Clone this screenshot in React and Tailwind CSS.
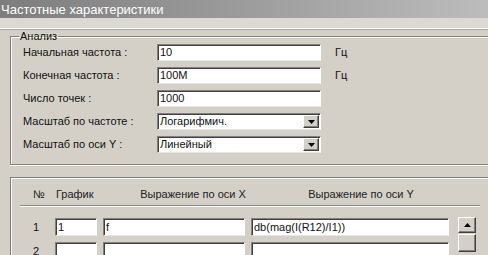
import React from "react";

const FIELDS = [
  { label: "Начальная частота :", value: "10", unit: "Гц" },
  { label: "Конечная частота :", value: "100M", unit: "Гц" },
  { label: "Число точек :", value: "1000" },
  { label: "Масштаб по частоте :", value: "Логарифмич.", select: true },
  { label: "Масштаб по оси Y :", value: "Линейный", select: true },
];

function Sunken({ className, children }) {
  return (
    <div
      className={
        "flex items-center bg-white border border-t-[#808080] border-l-[#808080] border-r-white border-b-[#e8e6e0] shadow-[inset_1px_1px_0_#404040] " +
        className
      }
    >
      {children}
    </div>
  );
}

function Arrow({ up }) {
  return (
    <svg width="7" height="4" viewBox="0 0 7 4">
      <path d={up ? "M0 4 L3.5 0 L7 4 Z" : "M0 0 L7 0 L3.5 4 Z"} fill="#000" />
    </svg>
  );
}

function RaisedButton({ className, children }) {
  return (
    <div
      className={
        "flex items-center justify-center bg-[#d4d0c8] border border-t-white border-l-white border-r-[#404040] border-b-[#404040] shadow-[inset_-1px_-1px_0_#808080] " +
        className
      }
    >
      {children}
    </div>
  );
}

export default function App() {
  return (
    <div className="w-[488px] h-[255px] overflow-hidden bg-[#d4d0c8] text-[11px] leading-[13px] text-[#111] font-['Liberation_Sans',Arial,sans-serif]">
      <div className="h-[18px] flex items-center pl-px text-[13px] text-white bg-gradient-to-r from-[#7d7d7d] to-[#bcbcbc]">
        Частотные характеристики
      </div>
      <div className="h-[11px] bg-[#dcd9d2] border-b border-white shadow-[0_1px_0_#a8a6a0]" />

      <fieldset className="ml-[10px] mt-[1px] w-[490px] h-[135px] border border-r-0 border-[#808080] shadow-[inset_1px_1px_0_#fff,0_1px_0_#fff]">
        <legend className="ml-[8px] px-[1px] text-[11px] leading-[12px]">Анализ</legend>
        <div className="flex flex-col gap-[6px] pt-[2px]">
          {FIELDS.map((f) => (
            <div key={f.label} className="flex items-center h-[17px]">
              <span className="w-[146px] pl-[12px]">{f.label}</span>
              <Sunken className="w-[164px] h-[17px] pl-[2px]">
                <span className="flex-1 leading-none">{f.value}</span>
                {f.select && (
                  <RaisedButton className="w-[16px] h-[13px] mr-px">
                    <Arrow />
                  </RaisedButton>
                )}
              </Sunken>
              {f.unit && <span className="ml-[14px]">{f.unit}</span>}
            </div>
          ))}
        </div>
      </fieldset>

      <div className="ml-[10px] mt-[12px] h-[90px] border border-r-0 border-b-0 border-[#808080] shadow-[inset_1px_1px_0_#fff] pt-[9px]">
        <div className="flex items-center h-[14px] text-[#222]">
          <span className="w-[45px] pl-[22px]">№</span>
          <span className="w-[68px]">График</span>
          <span className="w-[138px] text-center">Выражение по оси X</span>
          <span className="w-[198px] text-center">Выражение по оси Y</span>
        </div>
        <div className="ml-[9px] mr-[8px] mt-[4px] border-t border-[#8a8a8a] shadow-[0_1px_0_#fff]" />
        <div className="flex mt-[12px]">
          <div className="flex flex-col gap-[6px]">
            <div className="flex items-center h-[18px]">
              <span className="w-[44px] pl-[22px]">1</span>
              <Sunken className="w-[42px] h-[18px] pl-[2px]">1</Sunken>
              <Sunken className="w-[142px] h-[18px] ml-[6px] pl-[2px]">f</Sunken>
              <Sunken className="w-[198px] h-[18px] ml-[6px] pl-[2px]">db(mag(I(R12)/I1))</Sunken>
            </div>
            <div className="flex items-start h-[18px]">
              <span className="w-[44px] pl-[22px] pt-[3px]">2</span>
              <Sunken className="w-[42px] h-[18px]" />
              <Sunken className="w-[142px] h-[18px] ml-[6px]" />
              <Sunken className="w-[198px] h-[18px] ml-[6px]" />
            </div>
          </div>
          <div className="flex flex-col ml-[9px] -mt-px">
            <RaisedButton className="w-[18px] h-[16px]">
              <Arrow up />
            </RaisedButton>
            <RaisedButton className="w-[18px] h-[18px] mt-px" />
          </div>
        </div>
      </div>
    </div>
  );
}
